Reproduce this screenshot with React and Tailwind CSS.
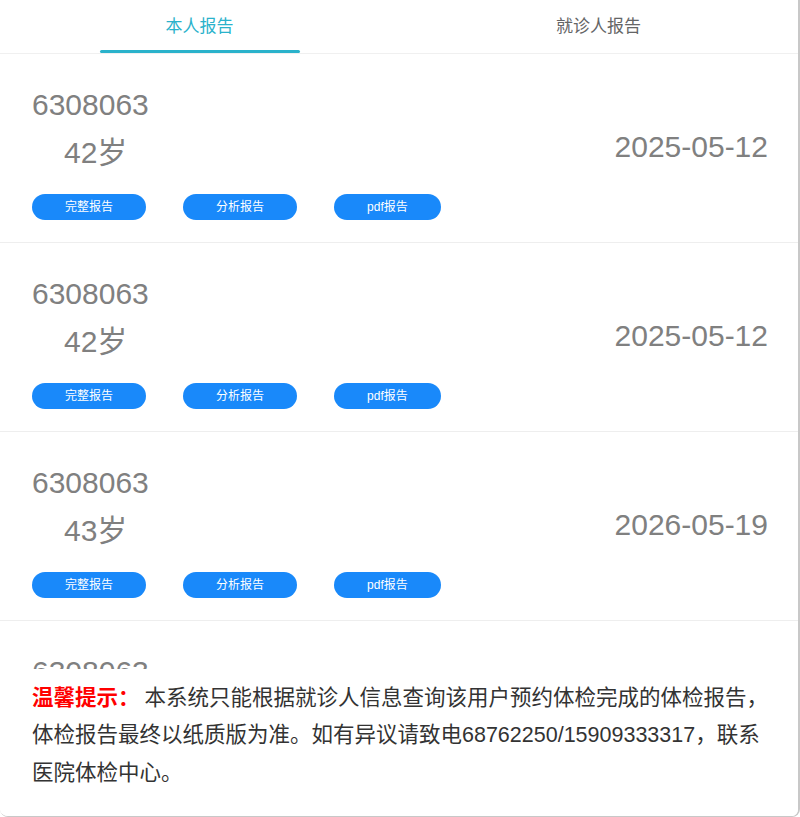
import React, { useState } from "react";

const reports = [
  { id: "6308063", age: "42岁", date: "2025-05-12" },
  { id: "6308063", age: "42岁", date: "2025-05-12" },
  { id: "6308063", age: "43岁", date: "2026-05-19" },
  { id: "6308063", age: "43岁", date: "2026-05-19" },
];

const font = { fontFamily: '"Liberation Sans", "Noto Sans CJK SC", sans-serif' };

function ReportRow({ item }) {
  return (
    <div className="flex items-center justify-between border-b border-[#eeeeee] pl-8 pr-[30px] pt-[27px] pb-[22px]">
      <div className="flex flex-col">
        <div className="text-[30px] leading-[48px] text-[#808080]">{item.id}</div>
        <div className="pl-8 text-[30px] leading-[48px] text-[#808080]">{item.age}</div>
        <div className="mt-[17px] flex gap-[37px]">
          {["完整报告", "分析报告", "pdf报告"].map((label) => (
            <button
              key={label}
              className="h-[26px] rounded-full bg-[#1989fa] px-[33px] text-[12px] leading-[26px] text-white"
            >
              {label}
            </button>
          ))}
        </div>
      </div>
      <div className="mb-[7px] text-[30px] leading-[48px] text-[#808080]">{item.date}</div>
    </div>
  );
}

export default function App() {
  const [tab, setTab] = useState(0);
  const tabs = ["本人报告", "就诊人报告"];

  return (
    <div
      className="flex h-[817px] w-[800px] flex-col overflow-hidden rounded-b-lg border-r-2 border-b border-[#c8c8c8] bg-white"
      style={font}
    >
      {/* tab bar */}
      <div className="flex h-[54px] shrink-0 border-b border-[#f0f0f0]">
        {tabs.map((t, i) => (
          <div
            key={t}
            onClick={() => setTab(i)}
            className="relative flex flex-1 cursor-pointer items-center justify-center pt-[1px]"
          >
            <span
              className={
                i === tab
                  ? "text-[17px] text-[#2ab2cb]"
                  : "text-[17px] text-[#646566]"
              }
            >
              {t}
            </span>
            {i === tab && (
              <span className="absolute bottom-[0px] left-1/2 h-[3px] w-[200px] -translate-x-1/2 rounded-full bg-[#2ab2cb]" />
            )}
          </div>
        ))}
      </div>

      {/* report list */}
      <div className="min-h-0 flex-1 overflow-hidden">
        {reports.map((r, i) => (
          <ReportRow key={i} item={r} />
        ))}
      </div>

      {/* notice */}
      <div className="shrink-0 bg-white pl-8 pr-[26px] pt-[11px] pb-[24px] text-[21.5px] leading-[37.5px] text-[#333333]">
        <span className="font-bold text-[#ff0000]">温馨提示：</span>
        <span className="ml-[5px]">
          本系统只能根据就诊人信息查询该用户预约体检完成的体检报告，体检报告最终以纸质版为准。如有异议请致电68762250/15909333317，联系医院体检中心。
        </span>
      </div>
    </div>
  );
}
